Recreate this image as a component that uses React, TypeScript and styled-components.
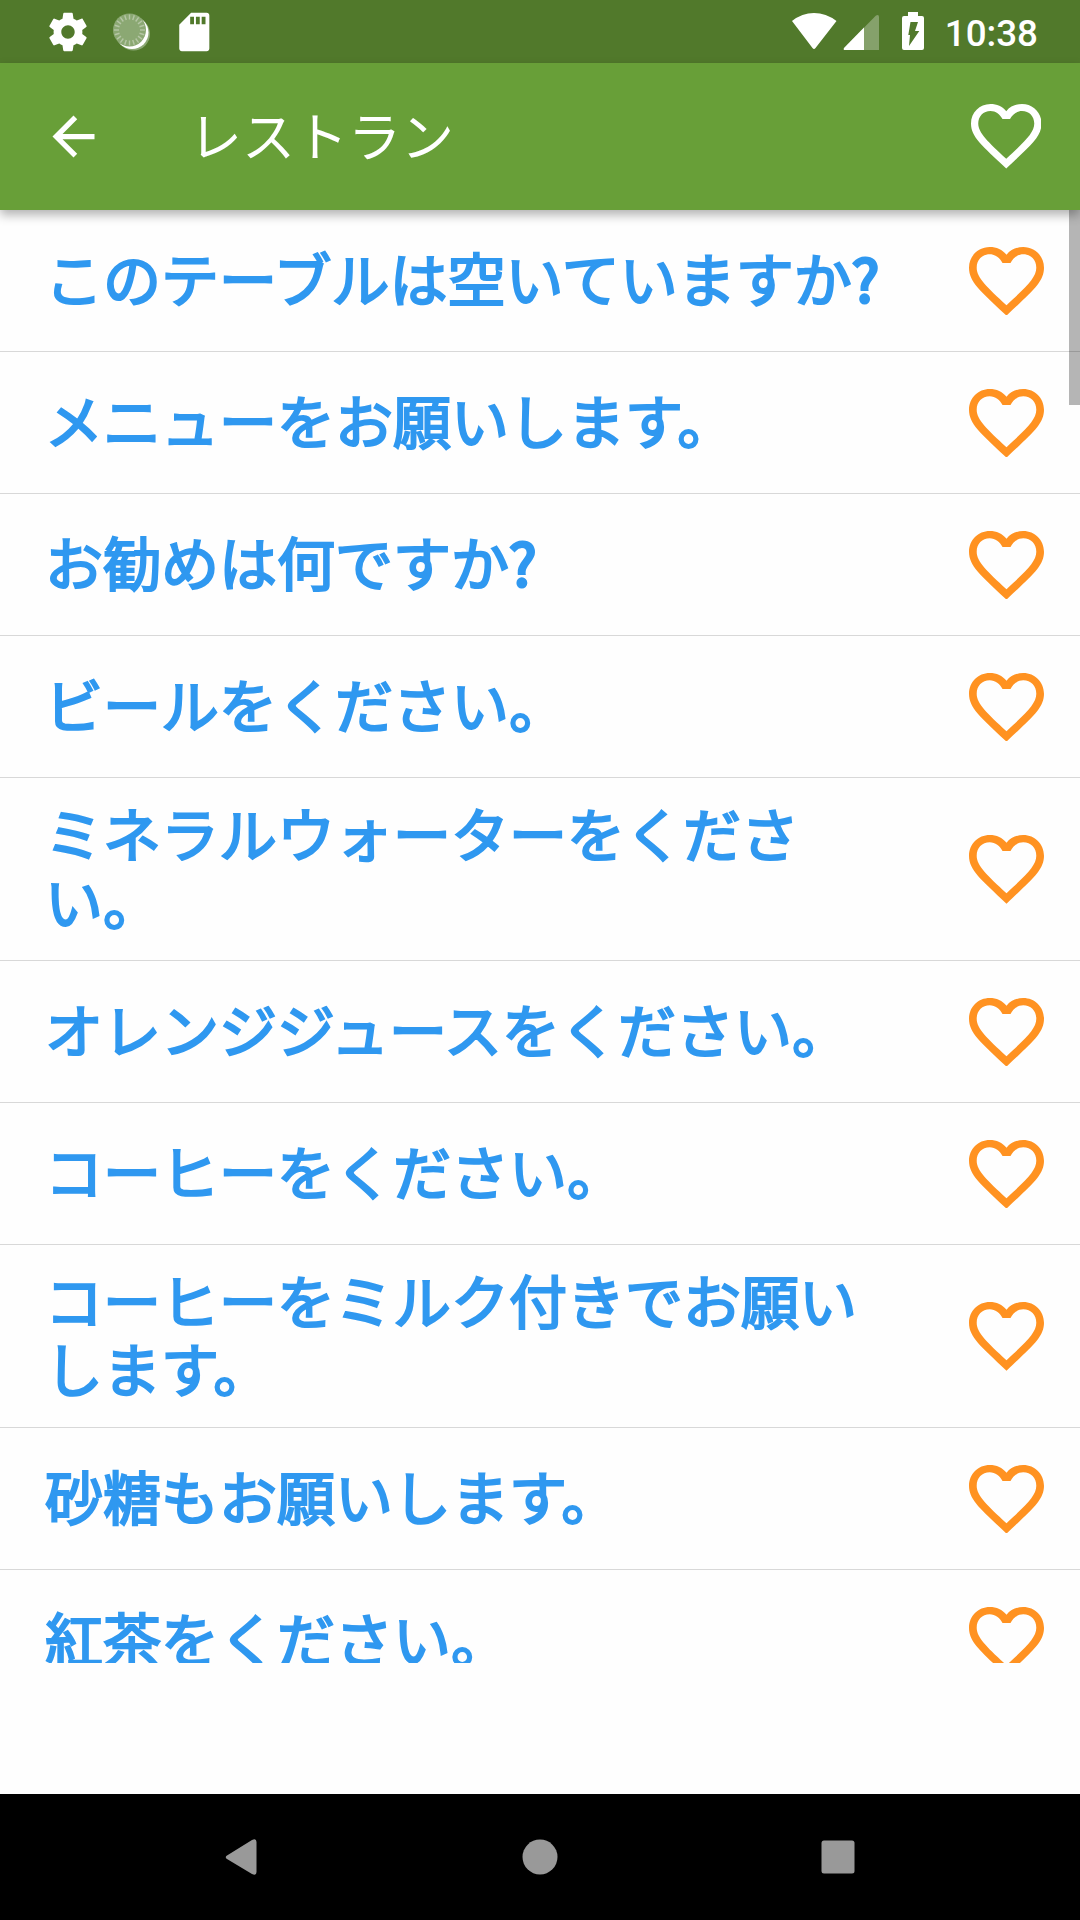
import React from "react";
import styled, { createGlobalStyle } from "styled-components";

const Global = createGlobalStyle`
  * { box-sizing: border-box; }
  body { margin: 0; background: #fff; }
`;

const Screen = styled.div`
  width: 1080px;
  height: 1920px;
  display: flex;
  flex-direction: column;
  overflow: hidden;
  background: #fefefe;
  font-family: Roboto, "Noto Sans CJK JP", sans-serif;
`;

const StatusBar = styled.div`
  flex: none;
  height: 63px;
  padding: 0 42px 0 45px;
  display: flex;
  align-items: center;
  justify-content: space-between;
  background: #51792b;
  color: #fff;
`;

const StatusGroup = styled.div<{ $gap: number }>`
  display: flex;
  align-items: center;
  gap: ${(p) => p.$gap}px;
  height: 63px;
`;

const Glyph = styled.svg`
  display: block;
  flex: none;
`;

const Clock = styled.span`
  font: 500 36.75px/63px Roboto, sans-serif;
  padding-top: 3px;
`;

const AppBar = styled.header`
  flex: none;
  height: 147px;
  padding: 0 39px 0 42px;
  display: flex;
  align-items: center;
  background: #689f38;
  color: #fff;
  position: relative;
  z-index: 1;
  box-shadow: 0 5px 10px rgba(0, 0, 0, 0.3);
`;

const Title = styled.h1`
  flex: 1;
  margin: 0 0 0 84px;
  padding-bottom: 5px;
  font: 400 53px/70px "Noto Sans CJK JP", sans-serif;
`;

const List = styled.main`
  flex: none;
  height: 1453px;
  overflow: hidden;
  position: relative;
`;

const Row = styled.div`
  min-height: 142px;
  padding: 22.5px 36px 21.5px 45px;
  display: flex;
  align-items: center;
  justify-content: space-between;
  border-bottom: 1px solid #d8d8d8;
`;

const Phrase = styled.div`
  width: 850px;
  padding-top: 2px;
  font: 400 58px/68px Roboto, "Noto Sans CJK JP", sans-serif;
  color: #2f98f0;
  -webkit-text-stroke: 2.2px #2f98f0;
`;

const QuestionMark = styled.span`
  font-family: "Noto Sans CJK JP", sans-serif;
  line-height: 0;
  -webkit-text-stroke-width: 3.2px;
`;

const ScrollThumb = styled.div`
  position: absolute;
  top: 0;
  right: 0;
  width: 11px;
  height: 195px;
  background: rgba(0, 0, 0, 0.285);
`;

const Spacer = styled.div`
  flex: 1;
`;

const NavBar = styled.nav`
  flex: none;
  height: 126px;
  padding-right: 1px;
  display: flex;
  align-items: center;
  justify-content: center;
  gap: 262px;
  background: #000;
`;

const HEART =
  "M112 23C100 8 82 0 62 0C27 0 0 27 0 62C0 105 35 132 112 205C189 132 224 105 224 62C224 27 197 0 162 0C142 0 124 8 112 23Z" +
  "M100 48L124 48C131 33 146 22 162 22C185 22 201 39 201 62C201 92 170 120 112 174C54 120 23 92 23 62C23 39 39 22 62 22C78 22 93 33 100 48Z";

function Heart({ width, color }: { width: number; color: string }) {
  return (
    <Glyph width={width} height={(width * 205) / 224} viewBox="0 0 224 205">
      <path d={HEART} fill={color} fillRule="evenodd" />
    </Glyph>
  );
}

const GEAR =
  "M19.43 12.98c.04-.32.07-.64.07-.98s-.03-.66-.07-.98l2.11-1.65c.19-.15.24-.42.12-.64l-2-3.46c-.12-.22-.39-.3-.61-.22l-2.49 1c-.52-.4-1.08-.73-1.69-.98l-.38-2.65C14.46 2.18 14.25 2 14 2h-4c-.25 0-.46.18-.49.42l-.38 2.65c-.61.25-1.17.59-1.69.98l-2.49-1c-.23-.09-.49 0-.61.22l-2 3.46c-.13.22-.07.49.12.64l2.11 1.65c-.04.32-.07.65-.07.98s.03.66.07.98l-2.11 1.65c-.19.15-.24.42-.12.64l2 3.46c.12.22.39.3.61.22l2.49-1c.52.4 1.08.73 1.69.98l.38 2.65c.03.24.24.42.49.42h4c.25 0 .46-.18.49-.42l.38-2.65c.61-.25 1.17-.59 1.69-.98l2.49 1c.23.09.49 0 .61-.22l2-3.46c.12-.22.07-.49-.12-.64l-2.11-1.65zM12 15.5c-1.93 0-3.5-1.57-3.5-3.5s1.57-3.5 3.5-3.5 3.5 1.57 3.5 3.5-1.57 3.5-3.5 3.5z";

const TICKS = Array.from({ length: 20 }, (_, i) => i * 18);

const PHRASES = [
  "このテーブルは空いていますか?",
  "メニューをお願いします。",
  "お勧めは何ですか?",
  "ビールをください。",
  "ミネラルウォーターをください。",
  "オレンジジュースをください。",
  "コーヒーをください。",
  "コーヒーをミルク付きでお願いします。",
  "砂糖もお願いします。",
  "紅茶をください。",
];

function PhraseText({ text }: { text: string }) {
  if (!text.endsWith("?")) return <Phrase>{text}</Phrase>;
  return (
    <Phrase>
      {text.slice(0, -1)}
      <QuestionMark>?</QuestionMark>
    </Phrase>
  );
}

export default function App() {
  return (
    <>
      <Global />
      <Screen lang="ja">
        <StatusBar>
          <StatusGroup $gap={17}>
            <Glyph width="46" height="46" viewBox="0 0 24 24" fill="#fff">
              <path d={GEAR} />
            </Glyph>
            <Glyph width="46" height="46" viewBox="0 0 46 46">
              <circle cx="25.5" cy="25" r="16.5" fill="#8ba873" />
              <circle cx="24" cy="23.5" r="16.5" fill="#fff" />
              <circle cx="21.5" cy="21" r="16.5" fill="#8ba873" />
              {TICKS.map((a) => (
                <line key={a} x1="21.5" y1="5.5" x2="21.5" y2="10.5" stroke="#b5c6a5" strokeWidth="1.4" transform={`rotate(${a} 21.5 21)`} />
              ))}
            </Glyph>
            <Glyph width="46" height="46" viewBox="0 0 24 24" fill="#fff">
              <path d="M18.600 2h-8.100L4.300 8.200v12.400c0 .8.600 1.400 1.400 1.400h12.900c.8 0 1.400-.6 1.400-1.400V3.400c0-.8-.6-1.400-1.400-1.400zm-6.600 6h-2V4h2v4zm3 0h-2V4h2v4zm3 0h-2V4h2v4z" />
            </Glyph>
          </StatusGroup>
          <StatusGroup $gap={0}>
            <Glyph width="154" height="63" viewBox="791 0 154 63" fill="#fff">
              <path d="M792 21Q802 13 814 13T836.500 21L815.500 48Q814 50 812.500 48Z" />
              <path d="M844 48L876 15.500Q879 14 879 17V50H845Q843 50 844 48Z" opacity="0.3" />
              <path d="M844 48L864 27.500V50H845Q843 50 844 48Z" />
              <path fillRule="evenodd" d="M908 12h10v4h4q2 0 2 2v30q0 2-2 2h-18q-2 0-2-2V18q0-2 2-2h4zM910.500 22h7.500l-3 9h4.300l-10.300 15 1-11h-1.700z" />
            </Glyph>
            <Clock>10:38</Clock>
          </StatusGroup>
        </StatusBar>
        <AppBar>
          <Glyph width="63" height="63" viewBox="0 0 24 24" fill="#fff">
            <path d="M20 11H7.830l5.590-5.590L12 4l-8 8 8 8 1.410-1.410L7.830 13H20v-2z" />
          </Glyph>
          <Title>レストラン</Title>
          <Heart width={70.5} color="#fff" />
        </AppBar>
        <List>
          {PHRASES.map((text) => (
            <Row key={text}>
              <PhraseText text={text} />
              <Heart width={75} color="#ff9221" />
            </Row>
          ))}
          <ScrollThumb />
        </List>
        <Spacer />
        <NavBar>
          <Glyph width="36" height="36" viewBox="0 0 36 36" fill="#999">
            <path d="M3 16.500L28 1Q32.500 -1 32.500 3V33Q32.500 37 28 35L3 20Q0.500 18 3 16.500Z" />
          </Glyph>
          <Glyph width="36" height="36" viewBox="0 0 36 36" fill="#999">
            <circle cx="18" cy="18" r="17.500" />
          </Glyph>
          <Glyph width="36" height="36" viewBox="0 0 36 36" fill="#999">
            <rect x="1.500" y="1.500" width="33" height="33" rx="2.500" />
          </Glyph>
        </NavBar>
      </Screen>
    </>
  );
}
